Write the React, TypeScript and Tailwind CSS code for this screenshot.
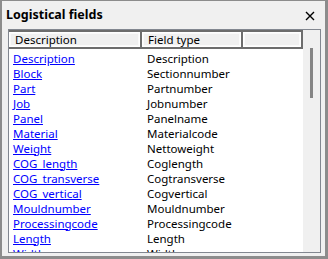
import React from "react";

const rows: [string, string][] = [
	["Description", "Description"],
	["Block", "Sectionnumber"],
	["Part", "Partnumber"],
	["Job", "Jobnumber"],
	["Panel", "Panelname"],
	["Material", "Materialcode"],
	["Weight", "Nettoweight"],
	["COG_length", "Coglength"],
	["COG_transverse", "Cogtransverse"],
	["COG_vertical", "Cogvertical"],
	["Mouldnumber", "Mouldnumber"],
	["Processingcode", "Processingcode"],
	["Length", "Length"],
	["Width", "Width"],
];

const HeaderCell = ({ label, w }: { label?: string; w: string }) => (
	<div className={`${w} h-full border-r-2 border-[#6d6d6d] p-px`}>
		<div className="flex h-full items-center border border-[#fafafa] bg-[#f0f0f0] pl-[4px]">
			{label}
		</div>
	</div>
);

const App = () => {
	return (
		<div
			className="flex h-[259px] w-[328px] flex-col border-t border-l-2 border-r-[3px] border-b-[3px] border-[#8c8c8c] bg-[#f0f0f0] text-[11.5px] text-black"
			style={{ fontFamily: '"Noto Sans", Tahoma, sans-serif' }}
		>
			<div className="flex h-[28px] shrink-0 items-center justify-between pl-[4px] pr-[10px]">
				<span className="text-[12.5px] font-bold">Logistical fields</span>
				<svg width="10" height="10" viewBox="0 0 10 10" className="mt-px">
					<path d="M1 1L9 9M9 1L1 9" stroke="#000" strokeWidth="1.4" />
				</svg>
			</div>
			<div className="mb-[3px] ml-[6px] mr-[4px] flex min-h-0 flex-1 border border-[#828790] bg-white">
				<div className="flex min-w-0 flex-1 flex-col overflow-hidden">
					<div className="flex h-[19px] shrink-0 border-y-2 border-[#6d6d6d]">
						<HeaderCell label="Description" w="w-[133px]" />
						<HeaderCell label="Field type" w="w-[101px]" />
						<HeaderCell w="w-[60px]" />
					</div>
					<div className="flex flex-col pt-[2px]">
						{rows.map(([name, type]) => (
							<div key={name} className="flex h-[15px] shrink-0 items-center leading-none">
								<a className="w-[135px] pl-[4px] text-[#0000ff] underline underline-offset-[1px]">
									{name}
								</a>
								<span className="pl-[3px]">{type}</span>
							</div>
						))}
					</div>
				</div>
				<div className="relative w-[17px] shrink-0 bg-[#f0f0f0]">
					<div className="absolute left-[7px] top-[18px] h-[50px] w-[3px] bg-[#858585]" />
				</div>
			</div>
		</div>
	);
};

export default App;
